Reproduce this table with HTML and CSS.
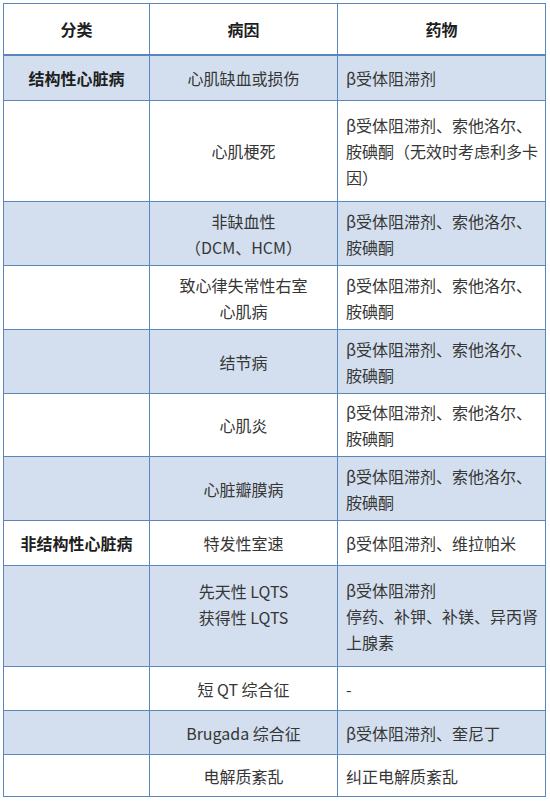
FILE: index.html
```html
<!DOCTYPE html>
<html lang="zh">
<head>
<meta charset="utf-8">
<title>室性心律失常病因与药物</title>
<link rel="stylesheet" href="styles.css">
</head>
<body>
<table class="grid">
  <colgroup>
    <col class="c1">
    <col class="c2">
    <col class="c3">
  </colgroup>
  <thead>
    <tr class="h-head">
      <th>分类</th>
      <th>病因</th>
      <th>药物</th>
    </tr>
  </thead>
  <tbody>
    <tr class="band h45">
      <td class="cat">结构性心脏病</td>
      <td class="cause">心肌缺血或损伤</td>
      <td class="drug">β受体阻滞剂</td>
    </tr>
    <tr class="h101">
      <td class="cat"></td>
      <td class="cause">心肌梗死</td>
      <td class="drug">β受体阻滞剂、索他洛尔、胺碘酮（无效时考虑利多卡因）</td>
    </tr>
    <tr class="band h64">
      <td class="cat"></td>
      <td class="cause">非缺血性<br>（DCM、HCM）</td>
      <td class="drug">β受体阻滞剂、索他洛尔、胺碘酮</td>
    </tr>
    <tr class="h64">
      <td class="cat"></td>
      <td class="cause">致心律失常性右室<br>心肌病</td>
      <td class="drug">β受体阻滞剂、索他洛尔、胺碘酮</td>
    </tr>
    <tr class="band h64">
      <td class="cat"></td>
      <td class="cause">结节病</td>
      <td class="drug">β受体阻滞剂、索他洛尔、胺碘酮</td>
    </tr>
    <tr class="h63">
      <td class="cat"></td>
      <td class="cause">心肌炎</td>
      <td class="drug">β受体阻滞剂、索他洛尔、胺碘酮</td>
    </tr>
    <tr class="band h64">
      <td class="cat"></td>
      <td class="cause">心脏瓣膜病</td>
      <td class="drug">β受体阻滞剂、索他洛尔、胺碘酮</td>
    </tr>
    <tr class="h45">
      <td class="cat">非结构性心脏病</td>
      <td class="cause">特发性室速</td>
      <td class="drug">β受体阻滞剂、维拉帕米</td>
    </tr>
    <tr class="band h101">
      <td class="cat"></td>
      <td class="cause top">先天性 LQTS<br>获得性 LQTS</td>
      <td class="drug">β受体阻滞剂<br>停药、补钾、补镁、异丙肾上腺素</td>
    </tr>
    <tr class="h44">
      <td class="cat"></td>
      <td class="cause">短 QT 综合征</td>
      <td class="drug">-</td>
    </tr>
    <tr class="band h44">
      <td class="cat"></td>
      <td class="cause">Brugada 综合征</td>
      <td class="drug">β受体阻滞剂、奎尼丁</td>
    </tr>
    <tr class="h42">
      <td class="cat"></td>
      <td class="cause">电解质紊乱</td>
      <td class="drug">纠正电解质紊乱</td>
    </tr>
  </tbody>
</table>
</body>
</html>
```
FILE: styles.css
```css
html, body {
  margin: 0;
  padding: 0;
  background: #ffffff;
}

body {
  padding: 3px;
  font-family: "Noto Sans CJK SC", "Noto Sans", sans-serif;
  font-size: 16px;
  line-height: 26px;
  color: #363636;
  text-spacing-trim: space-all;
}

.grid {
  border-collapse: separate;
  border-spacing: 0;
  table-layout: fixed;
  width: 543px;
  border-top: 1px solid #5a85bd;
  border-left: 1px solid #5a85bd;
}

.c1 { width: 146px; }
.c2 { width: 188px; }
.c3 { width: 208px; }

.grid th,
.grid td {
  border-right: 1px solid #5a85bd;
  border-bottom: 1px solid #5a85bd;
  padding: 0 8px;
  vertical-align: middle;
}

.grid th {
  border-bottom: 2px solid #5a85bd;
  font-weight: bold;
  color: #1e1e1e;
  text-align: center;
}

.band td {
  background: #d3dfee;
}

.cat {
  font-weight: bold;
  color: #1e1e1e;
  text-align: center;
  padding: 0 2px;
}

.cause {
  text-align: center;
}

.grid td.drug {
  text-align: left;
  padding: 0 0 0 8px;
}

.cause.top {
  vertical-align: top;
  padding-top: 12px;
}

.h-head { height: 52px; }
.h45 { height: 45px; }
.h101 { height: 101px; }
.h64 { height: 64px; }
.h63 { height: 63px; }
.h44 { height: 44px; }
.h42 { height: 42px; }
```
